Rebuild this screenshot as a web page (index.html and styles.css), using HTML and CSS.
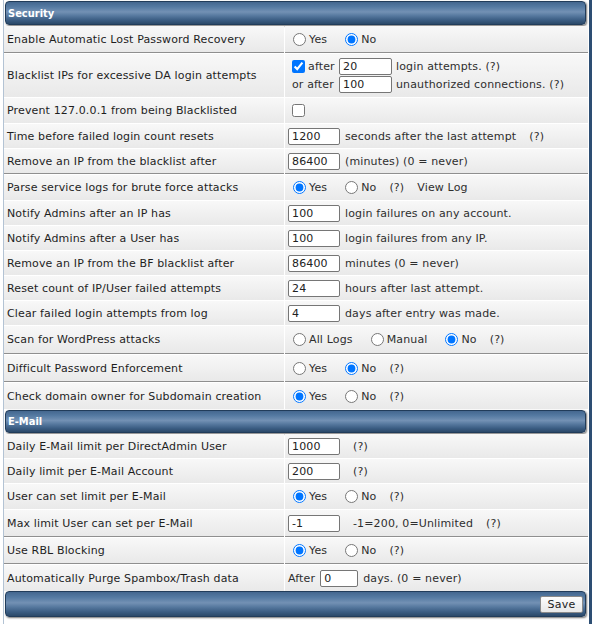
FILE: index.html
```html
<!DOCTYPE html>
<html>
<head>
<meta charset="utf-8">
<link rel="stylesheet" href="styles.css">
</head>
<body>
<div class="panel">
  <div class="bar first">Security</div>

  <div class="row h27 sep">
    <div class="lab">Enable Automatic Lost Password Recovery</div>
    <div class="val"><label class="opt"><input type="radio" name="r1">Yes</label><label class="opt"><input type="radio" name="r1" checked>No</label></div>
  </div>

  <div class="row h43">
    <div class="lab">Blacklist IPs for excessive DA login attempts</div>
    <div class="val bl">
      <span class="c1"><input type="checkbox" checked>after</span><input class="txt w53" type="text" value="20"><span class="c3">login attempts. (?)</span>
      <span class="c1 pad">or after</span><input class="txt w53" type="text" value="100"><span class="c3">unauthorized connections. (?)</span>
    </div>
  </div>

  <div class="row h25">
    <div class="lab">Prevent 127.0.0.1 from being Blacklisted</div>
    <div class="val"><input type="checkbox"></div>
  </div>

  <div class="row">
    <div class="lab">Time before failed login count resets</div>
    <div class="val"><input class="txt" type="text" value="1200"><span>seconds after the last attempt</span><span class="g13">(?)</span></div>
  </div>

  <div class="row h25 sep">
    <div class="lab">Remove an IP from the blacklist after</div>
    <div class="val"><input class="txt" type="text" value="86400"><span>(minutes) (0 = never)</span></div>
  </div>

  <div class="row h25">
    <div class="lab">Parse service logs for brute force attacks</div>
    <div class="val"><label class="opt"><input type="radio" name="r2" checked>Yes</label><label class="opt"><input type="radio" name="r2">No</label><span class="q">(?)</span><span>View Log</span></div>
  </div>

  <div class="row">
    <div class="lab">Notify Admins after an IP has</div>
    <div class="val"><input class="txt" type="text" value="100"><span>login failures on any account.</span></div>
  </div>

  <div class="row">
    <div class="lab">Notify Admins after a User has</div>
    <div class="val"><input class="txt" type="text" value="100"><span>login failures from any IP.</span></div>
  </div>

  <div class="row">
    <div class="lab">Remove an IP from the BF blacklist after</div>
    <div class="val"><input class="txt" type="text" value="86400"><span>minutes (0 = never)</span></div>
  </div>

  <div class="row">
    <div class="lab">Reset count of IP/User failed attempts</div>
    <div class="val"><input class="txt" type="text" value="24"><span>hours after last attempt.</span></div>
  </div>

  <div class="row">
    <div class="lab">Clear failed login attempts from log</div>
    <div class="val"><input class="txt" type="text" value="4"><span>days after entry was made.</span></div>
  </div>

  <div class="row h28 sep">
    <div class="lab">Scan for WordPress attacks</div>
    <div class="val"><label class="opt"><input type="radio" name="r3">All Logs</label><label class="opt"><input type="radio" name="r3">Manual</label><label class="opt"><input type="radio" name="r3" checked>No</label><span>(?)</span></div>
  </div>

  <div class="row h27 sep">
    <div class="lab">Difficult Password Enforcement</div>
    <div class="val"><label class="opt"><input type="radio" name="r4">Yes</label><label class="opt"><input type="radio" name="r4" checked>No</label><span>(?)</span></div>
  </div>

  <div class="row h26">
    <div class="lab">Check domain owner for Subdomain creation</div>
    <div class="val"><label class="opt"><input type="radio" name="r5" checked>Yes</label><label class="opt"><input type="radio" name="r5">No</label><span>(?)</span></div>
  </div>

  <div class="bar">E-Mail</div>

  <div class="row">
    <div class="lab">Daily E-Mail limit per DirectAdmin User</div>
    <div class="val"><input class="txt" type="text" value="1000"><span class="g8">(?)</span></div>
  </div>

  <div class="row">
    <div class="lab">Daily limit per E-Mail Account</div>
    <div class="val"><input class="txt" type="text" value="200"><span class="g8">(?)</span></div>
  </div>

  <div class="row h25">
    <div class="lab">User can set limit per E-Mail</div>
    <div class="val"><label class="opt"><input type="radio" name="r6" checked>Yes</label><label class="opt"><input type="radio" name="r6">No</label><span>(?)</span></div>
  </div>

  <div class="row h27 sep">
    <div class="lab">Max limit User can set per E-Mail</div>
    <div class="val"><input class="txt" type="text" value="-1"><span class="g8">-1=200, 0=Unlimited</span><span class="g13">(?)</span></div>
  </div>

  <div class="row h26 sep">
    <div class="lab">Use RBL Blocking</div>
    <div class="val"><label class="opt"><input type="radio" name="r7" checked>Yes</label><label class="opt"><input type="radio" name="r7">No</label><span>(?)</span></div>
  </div>

  <div class="row h26 last">
    <div class="lab">Automatically Purge Spambox/Trash data</div>
    <div class="val"><span>After</span><input class="txt w38 ml5" type="text" value="0"><span>days. (0 = never)</span></div>
  </div>

  <div class="bar foot"><button class="save" type="button">Save</button></div>
</div>
</body>
</html>
```

FILE: styles.css
```css
* {
  box-sizing: border-box;
}

html,
body {
  margin: 0;
  padding: 0;
  background: #ffffff;
}

body {
  font-family: "DejaVu Sans", Verdana, sans-serif;
  font-size: 11px;
  letter-spacing: 0.14px;
  color: #222222;
}

.panel {
  margin-left: 3px;
  width: 589px;
  min-height: 624px;
  border-left: 1px solid #b3c3d4;
  border-right: 3px solid #2d4e73;
  padding-right: 1px;
  padding-top: 1px;
}

.bar {
  margin: 0 2px 1px 1px;
  height: 23px;
  border: 1px solid #213c5a;
  border-radius: 4px;
  background: linear-gradient(to bottom, #44678f 0%, #557aa2 22%, #7391b4 45%, #57799f 62%, #3b5d83 82%, #2b4969 100%);
  box-shadow: 1px 1px 2px rgba(0, 0, 0, 0.55);
  color: #ffffff;
  font-family: "DejaVu Sans Condensed", "DejaVu Sans", sans-serif;
  font-weight: bold;
  font-size: 11px;
  letter-spacing: 0;
  padding-left: 2px;
  display: flex;
  align-items: center;
}

.bar.first {
  height: 24px;
}

.row {
  display: grid;
  grid-template-columns: 280px 303px;
  column-gap: 1px;
  margin-bottom: 1px;
  height: 24px;
}

.row.last {
  margin-bottom: 0;
}

.row > div {
  background: linear-gradient(to bottom, #f8f8f8, #e9e9e9);
  display: flex;
  align-items: center;
  white-space: nowrap;
}

.h25 { height: 25px; }
.h26 { height: 26px; }
.h27 { height: 27px; }
.h28 { height: 28px; }
.h43 { height: 43px; }

.sep > div {
  border-bottom: 1px solid #8f8f8f;
}

.lab {
  padding-left: 3px;
  color: #1e1e1e;
}

.val {
  padding-left: 3px;
  color: #2e2e2e;
}

.val.bl {
  display: grid;
  grid-template-columns: 51px 53px auto;
  row-gap: 1px;
  align-content: center;
  align-items: center;
}

.c1 {
  display: flex;
  align-items: center;
}

.c1.pad {
  padding-left: 4px;
}

.c3 {
  padding-left: 4px;
}

input[type="radio"] {
  width: 13px;
  height: 13px;
  margin: 0 3px 0 5px;
}

input[type="checkbox"] {
  width: 13px;
  height: 13px;
  margin: 0 3px 0 4px;
}

.opt {
  display: inline-flex;
  align-items: center;
  margin-right: 13px;
}

.q {
  margin-right: 13px;
}

.txt {
  width: 52px;
  height: 17px;
  margin: 0 5px 0 0;
  padding: 0 3px;
  border: 1px solid #767676;
  border-radius: 2px;
  background: #ffffff;
  font-family: "DejaVu Sans", Verdana, sans-serif;
  font-size: 11px;
  letter-spacing: 0.14px;
  color: #222222;
}

.w53 {
  width: 53px;
  margin-right: 0;
}

.w38 {
  width: 38px;
}

.ml5 {
  margin-left: 5px;
}

.g8 {
  margin-left: 8px;
}

.g13 {
  margin-left: 13px;
}

.foot {
  height: 26px;
  margin-bottom: 0;
  justify-content: flex-end;
  padding-right: 2px;
}

.save {
  width: 43px;
  height: 17px;
  padding: 0;
  border: 1px solid #8a8a8a;
  border-radius: 2px;
  background: linear-gradient(to bottom, #fdfdfd, #e8e8e8);
  font-family: "DejaVu Sans", Verdana, sans-serif;
  font-size: 11px;
  letter-spacing: 0.3px;
  color: #222222;
}
```
